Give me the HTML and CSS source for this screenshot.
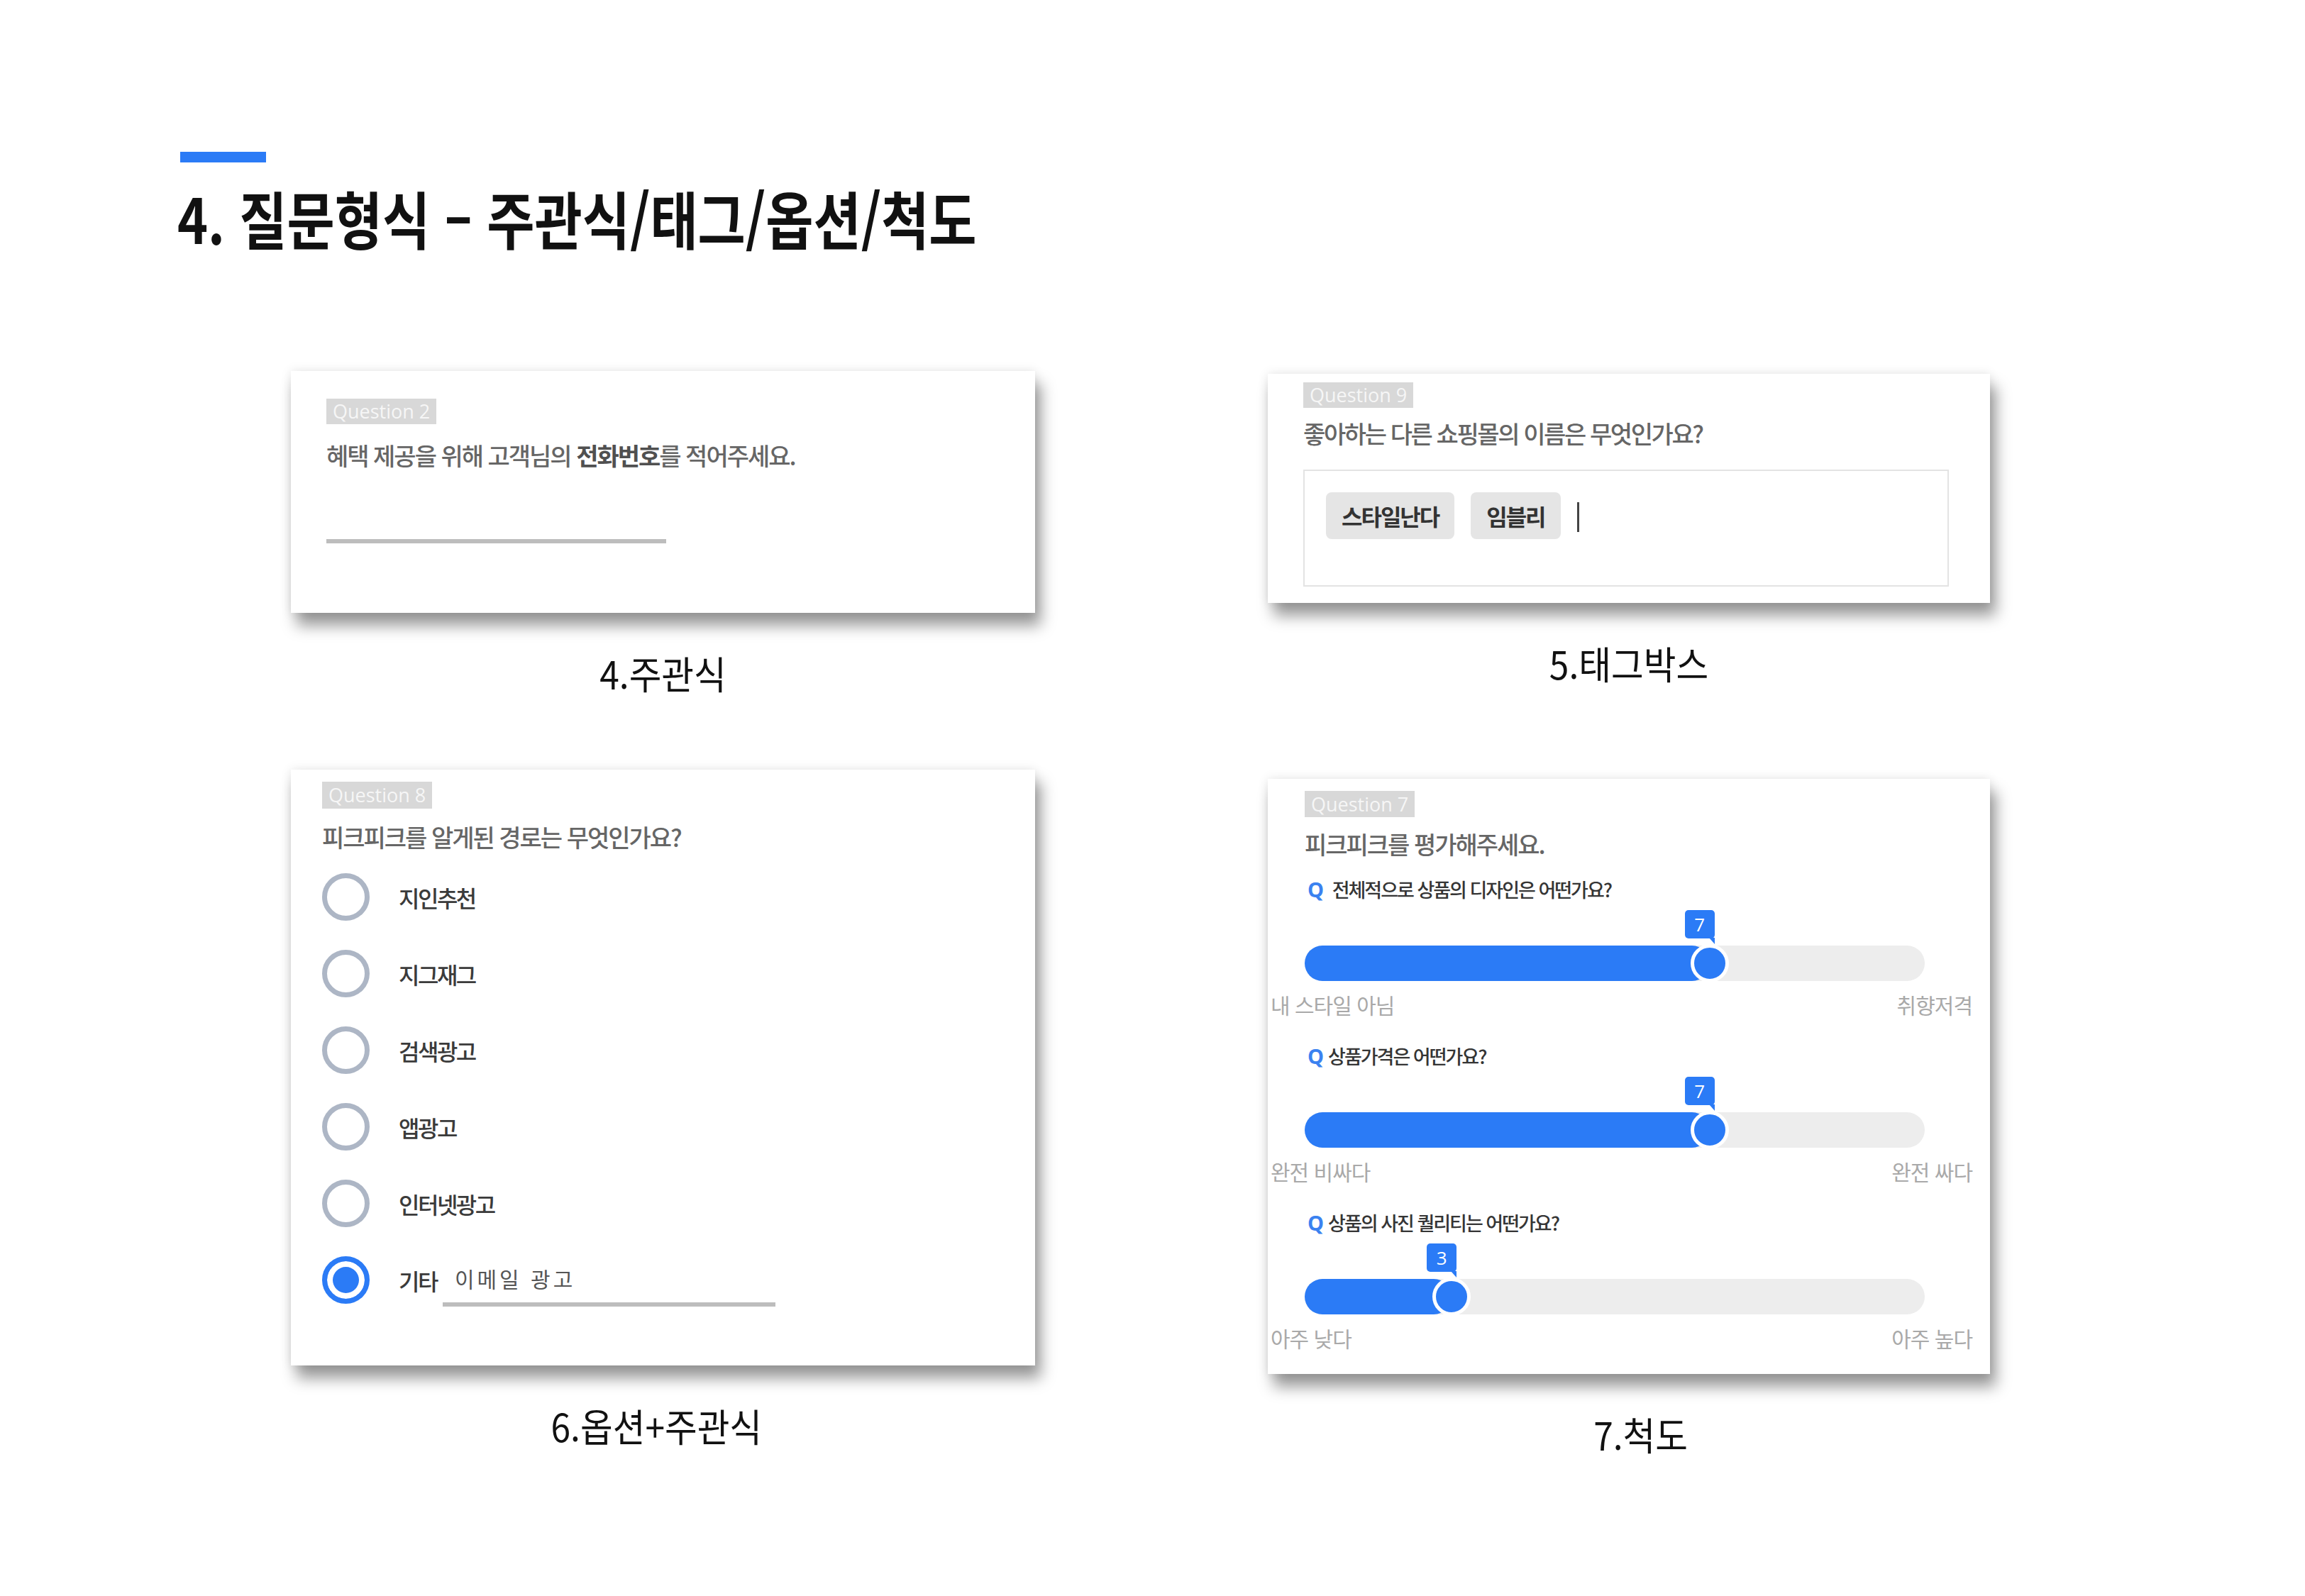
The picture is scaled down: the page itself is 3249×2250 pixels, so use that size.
FILE: index.html
```html
<!DOCTYPE html>
<html lang="ko">
<head>
    <meta charset="UTF-8">
    <title>질문형식 - 주관식/태그/옵션/척도</title>
    <link rel="stylesheet" href="styles.css">
</head>
<body>
    <div class="page">
        <header class="page-head">
            <div class="accent"></div>
            <h1>4. 질문형식 – 주관식/태그/옵션/척도</h1>
        </header>

        <div class="board">
            <!-- 4. 주관식 -->
            <figure class="sample">
                <div class="card card-text">
                    <div class="badge">Question 2</div>
                    <p class="question">혜택 제공을 위해 고객님의 <b>전화번호</b>를 적어주세요.</p>
                    <div class="line-input"></div>
                </div>
                <figcaption>4.주관식</figcaption>
            </figure>

            <!-- 5. 태그박스 -->
            <figure class="sample">
                <div class="card card-tags">
                    <div class="badge">Question 9</div>
                    <p class="question">좋아하는 다른 쇼핑몰의 이름은 무엇인가요?</p>
                    <div class="tag-box">
                        <span class="tag">스타일난다</span>
                        <span class="tag">임블리</span>
                        <span class="caret"></span>
                    </div>
                </div>
                <figcaption>5.태그박스</figcaption>
            </figure>

            <!-- 6. 옵션+주관식 -->
            <figure class="sample">
                <div class="card card-options">
                    <div class="badge">Question 8</div>
                    <p class="question">피크피크를 알게된 경로는 무엇인가요?</p>
                    <ul class="options">
                        <li class="option"><span class="radio"></span>지인추천</li>
                        <li class="option"><span class="radio"></span>지그재그</li>
                        <li class="option"><span class="radio"></span>검색광고</li>
                        <li class="option"><span class="radio"></span>앱광고</li>
                        <li class="option"><span class="radio"></span>인터넷광고</li>
                        <li class="option"><span class="radio radio-on"></span>기타<span class="other-input">이메일 광고</span></li>
                    </ul>
                </div>
                <figcaption class="caption-left">6.옵션+주관식</figcaption>
            </figure>

            <!-- 7. 척도 -->
            <figure class="sample">
                <div class="card card-scale">
                    <div class="badge">Question 7</div>
                    <p class="question">피크피크를 평가해주세요.</p>
                    <div class="scales">
                        <div class="scale">
                            <p class="scale-q"><b>Q</b> 전체적으로 상품의 디자인은 어떤가요?</p>
                            <div class="slider">
                                <div class="slider-fill" style="width: 65.3%">
                                    <span class="slider-value">7</span>
                                    <span class="slider-thumb"></span>
                                </div>
                            </div>
                            <div class="scale-ends"><span>내 스타일 아님</span><span>취향저격</span></div>
                        </div>
                        <div class="scale">
                            <p class="scale-q"><b>Q</b>상품가격은 어떤가요?</p>
                            <div class="slider">
                                <div class="slider-fill" style="width: 65.3%">
                                    <span class="slider-value">7</span>
                                    <span class="slider-thumb"></span>
                                </div>
                            </div>
                            <div class="scale-ends"><span>완전 비싸다</span><span>완전 싸다</span></div>
                        </div>
                        <div class="scale">
                            <p class="scale-q"><b>Q</b>상품의 사진 퀄리티는 어떤가요?</p>
                            <div class="slider">
                                <div class="slider-fill" style="width: 23.7%">
                                    <span class="slider-value">3</span>
                                    <span class="slider-thumb"></span>
                                </div>
                            </div>
                            <div class="scale-ends"><span>아주 낮다</span><span>아주 높다</span></div>
                        </div>
                    </div>
                </div>
                <figcaption class="caption-right">7.척도</figcaption>
            </figure>
        </div>
    </div>
</body>
</html>
```

FILE: styles.css
```css
* {
    box-sizing: border-box;
    margin: 0;
    padding: 0;
}
body {
    background: #ffffff;
    color: #111111;
    font-family: "Noto Sans CJK KR", "Noto Sans", sans-serif;
    height: 2250px;
    overflow: hidden;
    width: 3249px;
}
.page-head {
    padding: 214px 0 0 254px;
}
.accent {
    background: #2b7bf6;
    height: 15px;
    width: 121px;
}
h1 {
    font-size: 88px;
    font-weight: 700;
    line-height: 106px;
    margin-left: -4px;
    margin-top: 24px;
    transform: scaleX(0.83);
    transform-origin: left center;
    white-space: nowrap;
}
.board {
    align-items: start;
    column-gap: 328px;
    display: grid;
    grid-template-columns: 1049px 1018px;
    margin-top: 164px;
    padding-left: 410px;
    row-gap: 104px;
}
.sample {
    margin: 0;
}
figcaption {
    font-size: 54px;
    line-height: 64px;
    margin-top: 53px;
    text-align: center;
    transform: scaleX(0.92);
}
.caption-left {
    padding-right: 20px;
}
.caption-right {
    padding-left: 36px;
}

/* card shell */
.card {
    background: #ffffff;
    box-shadow: 8px 18px 20px rgba(0, 0, 0, 0.4), 0 0 14px rgba(0, 0, 0, 0.1);
}
.badge {
    background: #d8d8d8;
    color: #f6f6f6;
    font-family: "Open Sans", sans-serif;
    font-size: 27px;
    height: 36px;
    line-height: 36px;
    padding: 0 9px;
    width: fit-content;
}
.question {
    color: #666666;
    font-size: 34px;
    font-weight: 500;
    letter-spacing: -2px;
    line-height: 44px;
}
.question b {
    color: #505050;
    font-weight: 700;
}

/* 4. 주관식 */
.card-text {
    height: 341px;
    padding: 39px 50px 0;
}
.card-text .question {
    margin-top: 22px;
}
.line-input {
    background: #bdbdbd;
    height: 6px;
    margin-top: 96px;
    width: 479px;
}

/* 5. 태그박스 */
.card-tags {
    height: 323px;
    margin-top: 4px;
    padding: 12px 58px 0 50px;
}
.card-tags .question {
    letter-spacing: -2.4px;
    margin-top: 14px;
}
.tag-box {
    align-items: flex-start;
    border: 2px solid #e3e3e3;
    display: flex;
    gap: 23px;
    height: 165px;
    margin-top: 29px;
    padding: 30px;
}
.tag {
    background: #e5e5e5;
    border-radius: 8px;
    color: #333333;
    font-size: 32px;
    font-weight: 700;
    height: 66px;
    letter-spacing: -2px;
    line-height: 66px;
    padding: 0 22px;
}
.caret {
    background: #444444;
    height: 42px;
    margin-top: 14px;
    width: 3px;
}

/* 6. 옵션+주관식 */
.card-options {
    height: 840px;
    padding: 17px 44px 0;
}
.card-options .badge {
    height: 38px;
    line-height: 38px;
}
.card-options .question {
    margin-top: 18px;
}
.options {
    display: flex;
    flex-direction: column;
    gap: 41px;
    list-style: none;
    margin-top: 29px;
}
.option {
    align-items: center;
    color: #3b3b3b;
    display: flex;
    font-size: 32px;
    font-weight: 500;
    height: 67px;
    letter-spacing: -2.5px;
}
.radio {
    border: 7px solid #adb6c5;
    border-radius: 50%;
    flex: none;
    height: 67px;
    margin-right: 41px;
    width: 67px;
}
.radio-on {
    background: #2b7bf6;
    border-color: #2b7bf6;
    box-shadow: inset 0 0 0 8px #ffffff;
}
.other-input {
    border-bottom: 6px solid #bdbdbd;
    color: #555555;
    font-size: 30px;
    font-weight: 400;
    height: 74px;
    letter-spacing: 4px;
    line-height: 68px;
    margin-left: 8px;
    padding-left: 17px;
    width: 469px;
}

/* 7. 척도 */
.card-scale {
    height: 839px;
    margin-top: 13px;
    padding: 17px 92px 0 52px;
}
.card-scale .badge {
    height: 37px;
    line-height: 37px;
}
.card-scale .question {
    margin-top: 16px;
}
.scales {
    margin-top: 24px;
}
.scale + .scale {
    margin-top: 35px;
}
.scale-q {
    color: #353535;
    font-size: 27px;
    font-weight: 500;
    letter-spacing: -2px;
    line-height: 36px;
    padding-left: 4px;
}
.scale-q b {
    color: #3b82f0;
    font-family: "Open Sans", sans-serif;
    font-size: 29px;
    font-weight: 700;
    letter-spacing: 0;
    margin-right: 6px;
}
.slider {
    background: #ededed;
    border-radius: 25px;
    height: 50px;
    margin-top: 61px;
}
.slider-fill {
    background: #2b7bf6;
    border-radius: 25px;
    height: 100%;
    position: relative;
}
.slider-thumb {
    background: #2b7bf6;
    border: 5px solid #ffffff;
    border-radius: 50%;
    height: 54px;
    position: absolute;
    right: -27px;
    top: -2px;
    width: 54px;
}
.slider-value {
    background: #2b7bf6;
    border-radius: 5px;
    bottom: calc(100% + 10px);
    color: #ffffff;
    font-family: "Open Sans", sans-serif;
    font-size: 26px;
    height: 40px;
    line-height: 40px;
    position: absolute;
    right: -7px;
    text-align: center;
    width: 42px;
}
.slider-value::after {
    border-left: 8px solid transparent;
    border-top: 9px solid #2b7bf6;
    bottom: -8px;
    content: "";
    position: absolute;
    right: 0;
}
.scale-ends {
    color: #a9a9a9;
    display: flex;
    font-size: 30px;
    justify-content: space-between;
    letter-spacing: -1px;
    line-height: 40px;
    margin: 13px -67px 0 -48px;
}
```
